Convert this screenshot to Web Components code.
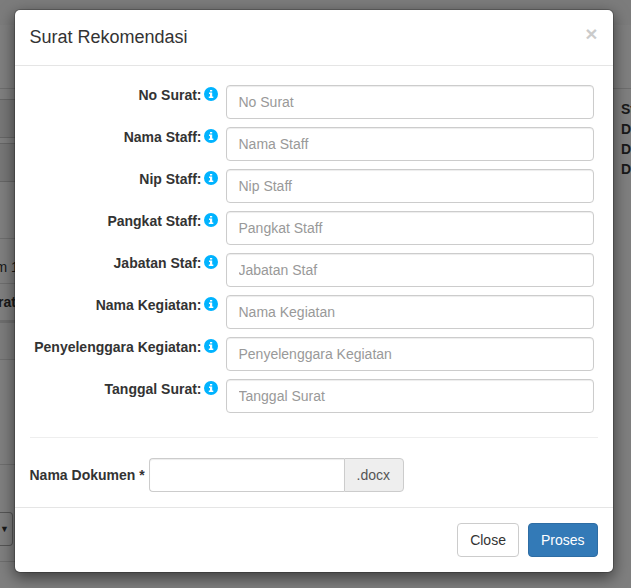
<!DOCTYPE html>
<html lang="id">
<head>
<meta charset="utf-8">
<title>Surat Rekomendasi</title>
<style>
html,body{margin:0;height:100%;overflow:hidden}
body{font:14px/20px "Liberation Sans",Arial,sans-serif;color:#333;background:#fff}
</style>
</head>
<body>
<app-shell>
  <page-behind slot="page"></page-behind>
  <modal-dialog heading="Surat Rekomendasi">
    <form-row label="No Surat"></form-row>
    <form-row label="Nama Staff"></form-row>
    <form-row label="Nip Staff"></form-row>
    <form-row label="Pangkat Staff"></form-row>
    <form-row label="Jabatan Staf"></form-row>
    <form-row label="Nama Kegiatan"></form-row>
    <form-row label="Penyelenggara Kegiatan"></form-row>
    <form-row label="Tanggal Surat"></form-row>
    <document-name slot="document" suffix=".docx">Nama Dokumen *</document-name>
    <bs-button slot="actions">Close</bs-button>
    <bs-button slot="actions" primary>Proses</bs-button>
  </modal-dialog>
</app-shell>
<script>
const define = (name, html, setup) => customElements.define(name, class extends HTMLElement {
  connectedCallback() {
    if (this.shadowRoot) return;
    const t = document.createElement('template');
    t.innerHTML = html;
    const root = this.attachShadow({ mode: 'open' });
    root.append(t.content.cloneNode(true));
    if (setup) setup(this, root);
  }
});

define('app-shell', `
<style>
:host{display:block;position:relative;height:588px;width:631px;overflow:hidden}
.backdrop{position:absolute;inset:0;background:rgba(0,0,0,.5);padding:9px 17px 0 13.5px;box-sizing:border-box}
</style>
<slot name="page"></slot>
<div class="backdrop"><slot></slot></div>`);

define('page-behind', `
<style>
:host{display:block;height:588px;color:#333}
*{box-sizing:border-box}
.nav{height:25px;background:#f8f8f8}
.cols{display:flex;justify-content:space-between;height:563px}
.left{width:15px;white-space:nowrap;display:flex;flex-direction:column}
.left>div{flex:none}
.line{border-bottom:1px solid #ddd}
.field{background:#eee;border:solid #ccc;border-width:1px 0}
.cell{display:flex;align-items:center}
.right{width:18px;white-space:nowrap;font-weight:bold}
.right .top{height:64px;border-bottom:1px solid #ddd;margin-bottom:10px}
.right p{margin:0 0 0 8px}
.select{width:13px;height:34px;border:1px solid #aaa;border-left:0;border-radius:0 4px 4px 0;display:flex;align-items:center;font-size:9px;background:#fff}
</style>
<div class="nav"></div>
<div class="cols">
 <div class="left">
  <div class="line" style="height:64px"></div>
  <div style="height:10px"></div>
  <div class="field" style="height:39px"></div>
  <div style="height:5px"></div>
  <div class="field" style="height:39px"></div>
  <div class="line" style="height:57px"></div>
  <div class="line cell" style="height:45px;padding-top:12px"><span style="margin-left:-4.5px">m 1</span></div>
  <div class="cell" style="height:36px;font-weight:bold"><span style="margin-left:-2px">rat</span></div>
  <div style="height:3px;background:#ddd"></div>
  <div class="line" style="height:37px;background:#f9f9f9"></div>
  <div class="line" style="height:105px"></div>
  <div style="height:47px"></div>
  <div class="select">▼</div>
  <div class="line" style="height:16px"></div>
 </div>
 <div class="right"><div class="top"></div><p>St</p><p>D</p><p>D</p><p>D</p></div>
</div>`);

define('modal-dialog', `
<style>
:host{display:flex;flex-direction:column;box-sizing:border-box;width:600px;height:564px;background:#fff;background-clip:padding-box;border:1px solid rgba(0,0,0,.2);border-radius:6px;box-shadow:0 5px 15px rgba(0,0,0,.5)}
header{display:flex;justify-content:space-between;height:56px;box-sizing:border-box;padding:14px 15px;border-bottom:1px solid #e5e5e5}
h4{margin:0;font-size:18px;font-weight:500;line-height:26px}
.x{font-size:21px;font-weight:bold;line-height:21px;margin-top:-1px;color:#000;opacity:.2;text-shadow:0 1px 0 #fff}
.body{padding:19px 15px 15px;display:flex;flex-direction:column}
.rows{display:flex;flex-direction:column;gap:8px;margin-right:4px}
hr{border:0;border-top:1px solid #eee;margin:24px 0 20px;width:100%;height:0}
footer{display:flex;justify-content:flex-end;gap:9px;padding:15px;border-top:1px solid #e5e5e5}
</style>
<header><h4></h4><span class="x">×</span></header>
<div class="body"><div class="rows"><slot></slot></div><hr><slot name="document"></slot></div>
<footer><slot name="actions"></slot></footer>`,
(el, root) => { root.querySelector('h4').textContent = el.getAttribute('heading'); });

define('info-icon', `
<style>:host{display:block;width:14px;height:14px}svg{display:block}</style>
<svg width="14" height="14" viewBox="0 0 14 14"><circle cx="7" cy="7" r="7" fill="#00b3ff"/><path d="M6 3h2.2v1.5H6zM5 5.5h3.2V9.5h1.1V11H4.8V9.5H6V7H5z" fill="#fff"/></svg>`);

define('form-row', `
<style>
:host{display:flex;height:34px;gap:8px}
.label{width:188px;display:flex;justify-content:flex-end;gap:2px;font-weight:bold;white-space:nowrap}
info-icon{margin-top:2px}
input{flex:1;min-width:0;box-sizing:border-box;height:34px;padding:6px 12px;font:inherit;color:#555;background:#fff;border:1px solid #ccc;border-radius:4px;box-shadow:inset 0 1px 1px rgba(0,0,0,.075)}
input::placeholder{color:#999;opacity:1}
</style>
<div class="label"><span></span><info-icon></info-icon></div><input>`,
(el, root) => {
  const text = el.getAttribute('label');
  root.querySelector('span').textContent = text + ':';
  root.querySelector('input').placeholder = text;
});

define('document-name', `
<style>
:host{display:flex;align-items:center;height:34px;font-weight:bold}
.label{width:119px;white-space:nowrap}
input{width:195px;height:34px;box-sizing:border-box;padding:6px 12px;font:inherit;border:1px solid #ccc;border-right:0;border-radius:4px 0 0 4px;background:#fff;box-shadow:inset 0 1px 1px rgba(0,0,0,.075)}
.suffix{box-sizing:border-box;height:34px;width:60px;padding-left:12px;line-height:32px;font-weight:normal;color:#555;background:#eee;border:1px solid #ccc;border-radius:0 4px 4px 0}
</style>
<span class="label"><slot></slot></span><input><span class="suffix"></span>`,
(el, root) => { root.querySelector('.suffix').textContent = el.getAttribute('suffix'); });

define('bs-button', `
<style>
:host{display:block}
button{display:block;height:34px;padding:0 12px;font:inherit;color:#333;background:#fff;border:1px solid #ccc;border-radius:4px}
:host([primary]) button{color:#fff;background:#337ab7;border-color:#2e6da4}
</style>
<button><slot></slot></button>`);
</script>
</body>
</html>
